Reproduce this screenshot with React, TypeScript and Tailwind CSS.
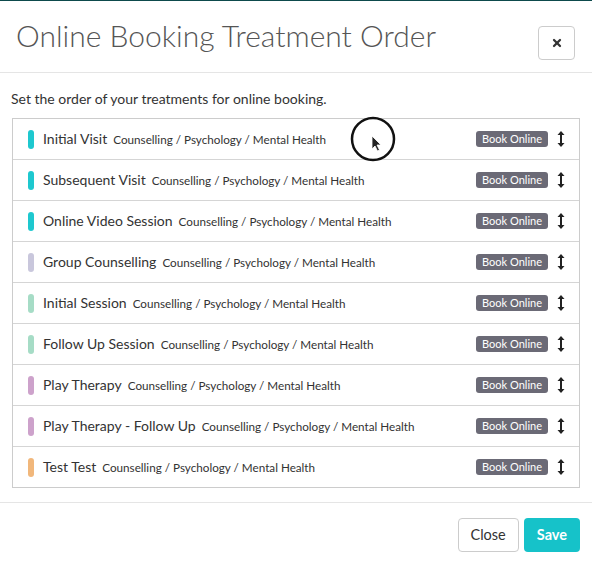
import { X } from "lucide-react";

const treatments = [
  { name: "Initial Visit", color: "bg-[#1ec8cf]" },
  { name: "Subsequent Visit", color: "bg-[#1ec8cf]" },
  { name: "Online Video Session", color: "bg-[#1ec8cf]" },
  { name: "Group Counselling", color: "bg-[#c9c7dc]" },
  { name: "Initial Session", color: "bg-[#a6dcc6]" },
  { name: "Follow Up Session", color: "bg-[#a6dcc6]" },
  { name: "Play Therapy", color: "bg-[#cda2cb]" },
  { name: "Play Therapy - Follow Up", color: "bg-[#cda2cb]" },
  { name: "Test Test", color: "bg-[#f1b77b]" },
];

function DragIcon() {
  return (
    <svg width="8" height="18" viewBox="0 0 8 18" className="text-[#222]">
      <path d="M4 1 L7.5 5 H0.5 Z M4 17 L7.5 13 H0.5 Z" fill="currentColor" />
      <rect x="3" y="4" width="2" height="10" fill="currentColor" />
    </svg>
  );
}

export default function App() {
  return (
    <div className="relative w-[592px] h-[566px] bg-white font-['Lato',sans-serif] text-[#333] overflow-hidden">
      <div className="h-px bg-[#0d4a4c]"></div>

      {/* Header */}
      <div className="flex items-center justify-between h-[72px] pl-4 pr-[17px] border-b border-[#e5e5e5]">
        <h1 className="text-[30px] font-light text-[#555] -mt-[2px]">
          Online Booking Treatment Order
        </h1>
        <button className="w-[37px] h-[34px] mt-[12px] rounded border border-[#ccc] flex items-center justify-center">
          <X size={12} strokeWidth={4.5} className="text-[#333]" />
        </button>
      </div>

      {/* Body */}
      <div className="px-3 pt-[15px] pb-[14px]">
        <p className="text-[14px] text-[#333] -ml-px mb-[9px]">
          Set the order of your treatments for online booking.
        </p>
        <div className="border border-[#ccc]">
          {treatments.map((t, i) => (
            <div
              key={t.name}
              className={`flex items-center pl-[15px] pr-[14px] ${
                i > 0 ? "h-[41px] border-t border-[#d5d5d5]" : "h-[40px]"
              }`}
            >
              <span className={`w-[6px] h-[19px] rounded-full ${t.color}`}></span>
              <div className="flex items-baseline ml-[9px] -mt-px">
                <span className="text-[14px] text-[#333]">{t.name}</span>
                <span className="ml-[6px] text-[11.7px] text-[#333]">
                  Counselling / Psychology / Mental Health
                </span>
              </div>
              <span className="ml-auto h-[16px] px-[6px] rounded-[3px] bg-[#6b6a76] text-white text-[11px] leading-[16px]">
                Book Online
              </span>
              <span className="ml-[9px] flex items-center">
                <DragIcon />
              </span>
            </div>
          ))}
        </div>
      </div>

      {/* Footer */}
      <div className="flex justify-end gap-[5px] border-t border-[#e5e5e5] pt-[15px] pr-3">
        <button className="h-[34px] px-[12px] rounded border border-[#ccc] text-[14.5px] text-[#333] bg-white">
          Close
        </button>
        <button className="h-[34px] px-[13px] rounded bg-[#16c2c9] text-[14.5px] font-bold text-white">
          Save
        </button>
      </div>

      {/* Cursor highlight from the recording */}
      <svg
        className="absolute left-[350px] top-[116px] pointer-events-none"
        width="48"
        height="48"
        viewBox="0 0 48 48"
      >
        <circle cx="23" cy="23" r="21" fill="none" stroke="#111" strokeWidth="2.5" />
        <path d="M22 20 L22 33 L25 30 L27.5 35 L29.5 34 L27 29 L31 29 Z" fill="#222" stroke="#fff" strokeWidth="0.8" />
      </svg>
    </div>
  );
}
